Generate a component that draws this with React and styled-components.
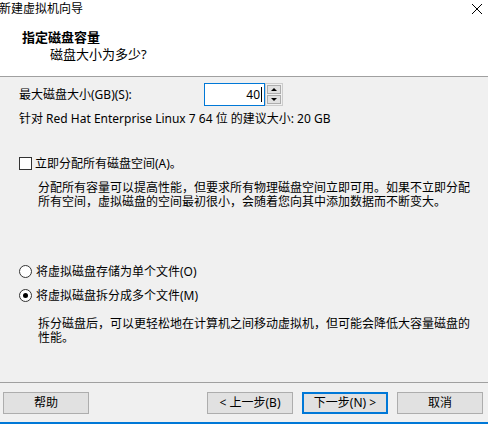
import styled, { createGlobalStyle } from "styled-components";

const GlobalStyle = createGlobalStyle`
  html, body {
    margin: 0;
    padding: 0;
    background: #f0f0f0;
    overflow: hidden;
  }
`;

const Window = styled.div`
  box-sizing: border-box;
  width: 488px;
  height: 424px;
  display: flex;
  flex-direction: column;
  background: #f0f0f0;
  border-bottom: 2px solid #0078d7;
  font-family: "Noto Sans", "Noto Sans CJK SC", sans-serif;
  font-size: 12px;
  color: #000;
  overflow: hidden;
`;

const Header = styled.div`
  height: 76px;
  background: #fff;
  border-bottom: 1px solid #a0a0a0;
  display: flex;
  flex-direction: column;
`;

const TitleBar = styled.div`
  width: 488px;
  height: 16px;
  display: flex;
  align-items: center;
`;

const Title = styled.span`
  flex: 1;
  margin-left: -1px;
  line-height: 16px;
  font-family: "Noto Sans CJK SC", sans-serif;
`;

const CloseIcon = styled.svg`
  display: block;
  flex: none;
  margin: 2px 5px 0 0;
`;

const Heading = styled.div`
  margin-top: 13px;
  padding-left: 22px;
  font-size: 13px;
  font-weight: 700;
  line-height: 16px;
  font-family: "Noto Sans CJK SC", sans-serif;
`;

const Sub = styled.div`
  margin-top: 1px;
  padding-left: 50px;
  font-size: 13px;
  line-height: 16px;
`;

const Body = styled.div`
  flex: 1;
  display: flex;
  flex-direction: column;
  padding-left: 19px;
`;

const SizeRow = styled.div`
  margin-top: 6px;
  display: flex;
  align-items: center;
  height: 23px;
`;

const Label = styled.span`
  width: 185px;
  line-height: 14px;
`;

const Input = styled.div`
  box-sizing: border-box;
  width: 61px;
  height: 23px;
  background: #fff;
  border: 1px solid #0078d7;
  display: flex;
  align-items: center;
  justify-content: flex-end;
  padding-right: 2px;
  line-height: 14px;
`;

const Caret = styled.span`
  display: inline-block;
  width: 1px;
  height: 15px;
  background: #000;
  margin-left: 1px;
`;

const Spinner = styled.div`
  box-sizing: border-box;
  width: 18px;
  height: 23px;
  border: 1px solid #cccccc;
  background: #f0f0f0;
  display: flex;
  flex-direction: column;
  gap: 1px;
  padding: 1px;
`;

const SpinButton = styled.div`
  box-sizing: border-box;
  flex: 1;
  border: 1px solid #adadad;
  background: #e1e1e1;
  display: flex;
  align-items: center;
  justify-content: center;
`;

const Arrow = styled.span`
  width: 0;
  height: 0;
  border-left: 3px solid transparent;
  border-right: 3px solid transparent;
  ${(p) =>
    p.$down ? "border-top: 3px solid #000;" : "border-bottom: 3px solid #000;"}
`;

const Line = styled.div`
  margin-top: ${(p) => p.$top}px;
  line-height: 14px;
  white-space: nowrap;
`;

const OptionRow = styled.div`
  margin-top: ${(p) => p.$top}px;
  display: flex;
  align-items: center;
  height: 14px;
  white-space: nowrap;
`;

const Check = styled.span`
  box-sizing: border-box;
  width: 13px;
  height: 13px;
  border: 1px solid #333;
  background: #fff;
  margin-right: 3px;
`;

const Radio = styled.span`
  box-sizing: border-box;
  width: 13px;
  height: 13px;
  border: 1px solid #333;
  border-radius: 50%;
  background: #fff;
  margin-right: 4px;
  display: flex;
  align-items: center;
  justify-content: center;

  &::after {
    content: "";
    display: ${(p) => (p.$checked ? "block" : "none")};
    width: 5px;
    height: 5px;
    border-radius: 50%;
    background: #000;
  }
`;

const Para = styled.p`
  margin: ${(p) => p.$top}px 0 0 19px;
  line-height: 14px;
  font-family: "Noto Sans CJK SC", sans-serif;
  white-space: nowrap;
`;

const Footer = styled.div`
  border-top: 1px solid #a0a0a0;
  padding: 9px 5px 8px 3px;
  display: flex;
  align-items: center;
`;

const Button = styled.button`
  box-sizing: border-box;
  width: 86px;
  height: 22px;
  margin: 0;
  padding: 0;
  margin-left: ${(p) => p.$left || 0};
  background: #e1e1e1;
  border: ${(p) => (p.$primary ? "2px solid #0078d7" : "1px solid #adadad")};
  font-family: "Noto Sans", "Noto Sans CJK SC", sans-serif;
  font-size: 12px;
  color: #000;
  line-height: 14px;
`;

export default function App() {
  return (
    <Window>
      <GlobalStyle />
      <Header>
        <TitleBar>
          <Title>新建虚拟机向导</Title>
          <CloseIcon width="12" height="12" viewBox="0 0 12 12" shapeRendering="crispEdges">
            <rect x="1" y="1" width="1" height="1" />
            <rect x="2" y="2" width="1" height="1" />
            <rect x="3" y="3" width="1" height="1" />
            <rect x="4" y="4" width="1" height="1" />
            <rect x="5" y="5" width="1" height="1" />
            <rect x="6" y="6" width="1" height="1" />
            <rect x="7" y="7" width="1" height="1" />
            <rect x="8" y="8" width="1" height="1" />
            <rect x="9" y="9" width="1" height="1" />
            <rect x="10" y="10" width="1" height="1" />
            <rect x="10" y="1" width="1" height="1" />
            <rect x="9" y="2" width="1" height="1" />
            <rect x="8" y="3" width="1" height="1" />
            <rect x="7" y="4" width="1" height="1" />
            <rect x="6" y="5" width="1" height="1" />
            <rect x="5" y="6" width="1" height="1" />
            <rect x="4" y="7" width="1" height="1" />
            <rect x="3" y="8" width="1" height="1" />
            <rect x="2" y="9" width="1" height="1" />
            <rect x="1" y="10" width="1" height="1" />
          </CloseIcon>
        </TitleBar>
        <Heading>指定磁盘容量</Heading>
        <Sub>磁盘大小为多少?</Sub>
      </Header>
      <Body>
        <SizeRow>
          <Label>最大磁盘大小(GB)(S):</Label>
          <Input>
            40
            <Caret />
          </Input>
          <Spinner>
            <SpinButton>
              <Arrow />
            </SpinButton>
            <SpinButton>
              <Arrow $down />
            </SpinButton>
          </Spinner>
        </SizeRow>
        <Line $top={6}>针对 Red Hat Enterprise Linux 7 64 位 的建议大小: 20 GB</Line>
        <OptionRow $top={30}>
          <Check />
          立即分配所有磁盘空间(A)。
        </OptionRow>
        <Para $top={10}>
          分配所有容量可以提高性能，但要求所有物理磁盘空间立即可用。如果不立即分配
          <br />
          所有空间，虚拟磁盘的空间最初很小，会随着您向其中添加数据而不断变大。
        </Para>
        <OptionRow $top={56}>
          <Radio />
          将虚拟磁盘存储为单个文件(O)
        </OptionRow>
        <OptionRow $top={10}>
          <Radio $checked />
          将虚拟磁盘拆分成多个文件(M)
        </OptionRow>
        <Para $top={14}>
          拆分磁盘后，可以更轻松地在计算机之间移动虚拟机，但可能会降低大容量磁盘的
          <br />
          性能。
        </Para>
      </Body>
      <Footer>
        <Button>帮助</Button>
        <Button $left="auto">&lt; 上一步(B)</Button>
        <Button $left="9px" $primary>
          下一步(N) &gt;
        </Button>
        <Button $left="9px">取消</Button>
      </Footer>
    </Window>
  );
}
